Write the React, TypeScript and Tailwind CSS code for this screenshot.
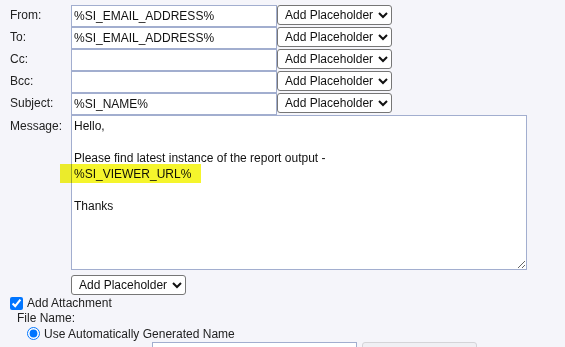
const font = "font-['Tahoma','Liberation_Sans',sans-serif] text-[12px]"

const rows = [
  { label: 'From:', value: '%SI_EMAIL_ADDRESS%' },
  { label: 'To:', value: '%SI_EMAIL_ADDRESS%' },
  { label: 'Cc:', value: '' },
  { label: 'Bcc:', value: '' },
  { label: 'Subject:', value: '%SI_NAME%' },
]

const message =
  'Hello,\n\nPlease find latest instance of the report output -\n%SI_VIEWER_URL%\n\nThanks'

function PlaceholderSelect() {
  return (
    <select
      className={`${font} h-[20px] w-[115px] rounded-[3px] border border-[#767676] bg-white pl-[3px] text-[#111]`}
      defaultValue="add"
    >
      <option value="add">Add Placeholder</option>
    </select>
  )
}

export default function App() {
  return (
    <div className={`${font} h-[347px] w-[565px] overflow-hidden bg-[#f5f5fa] pt-[5px] text-[#222]`}>
      {/* header fields */}
      {rows.map((r) => (
        <div key={r.label} className="flex h-[22px] items-start">
          <div className="w-[71px] pl-[10px] pt-[2px] leading-[16px]">{r.label}</div>
          <input
            className={`${font} h-[22px] w-[206px] border border-[#a2aecf] bg-white px-[2px] text-[#111] outline-none`}
            defaultValue={r.value}
          />
          <PlaceholderSelect />
        </div>
      ))}

      {/* message */}
      <div className="flex items-start">
        <div className="w-[71px] pl-[10px] pt-[3px] leading-[16px]">Message:</div>
        <div className="relative">
          <textarea
            className={`${font} block h-[155px] w-[456px] border border-[#a2aecf] bg-white px-[2px] pt-[2px] leading-[16px] text-[#111] outline-none`}
            defaultValue={message}
          />
          <div className="pointer-events-none absolute left-[-11px] top-[49px] h-[19px] w-[141px] bg-[#f5f52c] mix-blend-multiply" />
        </div>
      </div>

      <div className="mt-[5px] pl-[71px]">
        <PlaceholderSelect />
      </div>

      <label className="flex h-[16px] items-center gap-[4px] pl-[10px]">
        <input type="checkbox" defaultChecked className="m-0 h-[13px] w-[13px] accent-[#0075ff]" />
        Add Attachment
      </label>
      <div className="pl-[17px] leading-[15px]">File Name:</div>
      <label className="flex h-[15px] items-center gap-[4px] pl-[27px]">
        <input type="radio" name="fn" defaultChecked className="m-0 h-[13px] w-[13px] accent-[#0075ff]" />
        Use Automatically Generated Name
      </label>
      <div className="mt-[1px] flex items-start gap-[5px] pl-[152px]">
        <div className="h-[22px] w-[205px] border border-[#a2aecf] bg-white" />
        <div className="h-[22px] w-[115px] rounded-[3px] border border-[#d4d4d8] bg-[#f0f0f4]" />
      </div>
    </div>
  )
}
